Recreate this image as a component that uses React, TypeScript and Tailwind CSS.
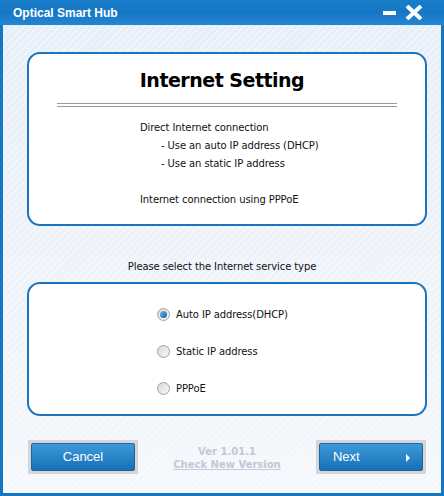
import React from "react"

const tahoma = { fontFamily: "'DejaVu Sans', Verdana, sans-serif" }

function Radio({ checked }: { checked?: boolean }) {
  return (
    <span className="w-[13px] h-[13px] rounded-full border border-[#a3a3a3] bg-gradient-to-br from-[#d8d8d8] to-[#f8f8f8] flex items-center justify-center">
      {checked && <span className="w-[7px] h-[7px] rounded-full bg-gradient-to-br from-[#6bbcf0] to-[#0f5f9c]" />}
    </span>
  )
}

function BlueButton({ label, arrow }: { label: string; arrow?: boolean }) {
  return (
    <div className="w-[110px] h-[34px] bg-[#d4d6d8] p-[3px]">
      <div
        className="h-full rounded-[2px] bg-gradient-to-b from-[#3d9ad9] to-[#1570b7] border border-[#1a66a6] flex items-center text-white text-[13px] relative"
        style={{ fontFamily: "'Liberation Sans', Arial, sans-serif" }}
      >
        {arrow ? (
          <>
            <span className="pl-[13px]">{label}</span>
            <span className="absolute right-[12px] top-[10px] w-0 h-0 border-y-[4px] border-y-transparent border-l-[4px] border-l-white" />
          </>
        ) : (
          <span className="w-full text-center">{label}</span>
        )}
      </div>
    </div>
  )
}

export default function App() {
  return (
    <div className="w-[444px] h-[496px] bg-[#1577c4] flex flex-col">
      {/* Title bar */}
      <div className="h-[25px] flex items-center justify-between pl-[13px] pr-[21px] bg-gradient-to-b from-[#1a7dc9] via-[#1678c5] to-[#2386d3]">
        <span className="text-white font-bold text-[12px]" style={{ fontFamily: "'Liberation Sans', Arial, sans-serif" }}>
          Optical Smart Hub
        </span>
        <div className="flex items-center gap-[9px]">
          <span className="w-[13px] h-[4px] bg-white mt-[1px]" />
          <svg width="18" height="15" viewBox="0 0 18 15">
            <path d="M2 1 L16 14 M16 1 L2 14" stroke="white" strokeWidth="4" />
          </svg>
        </div>
      </div>

      {/* Content */}
      <div
        className="flex-1 mx-[3px] mb-[3px] flex flex-col pl-[24px] pr-[14px] pt-[27px]"
        style={{ backgroundImage: "repeating-linear-gradient(135deg, rgba(255,255,255,0.35) 0 2px, transparent 2px 5px), linear-gradient(#e6eef7, #f4f7fb)" }}
      >
        <div className="h-[174px] bg-white border-2 border-[#1c73bd] rounded-[13px] flex flex-col items-center pt-[13px]">
          <h1 className="text-[19px] font-bold text-black leading-[26px] tracking-[-0.5px] -ml-[10px]" style={tahoma}>
            Internet Setting
          </h1>
          <div className="w-[340px] h-[4px] border-y border-[#9a9a9a] mt-[10px]" />
          <div className="self-start ml-[111px] mt-[12px] text-[10px] text-[#111] leading-[18px] tracking-[-0.1px]" style={tahoma}>
            <p>Direct Internet connection</p>
            <p className="pl-[21px]">- Use an auto IP address (DHCP)</p>
            <p className="pl-[21px]">- Use an static IP address</p>
            <p className="mt-[18px]">Internet connection using PPPoE</p>
          </div>
        </div>

        <p className="text-center text-[10px] text-[#111] mt-[33px] leading-[16px] -ml-[10px] tracking-[-0.1px]" style={tahoma}>
          Please select the Internet service type
        </p>

        <div
          className="h-[134px] mt-[7px] bg-white border-2 border-[#1c73bd] rounded-[13px] flex flex-col pl-[128px] pt-[24px] gap-[24px] text-[10px] text-[#111] tracking-[-0.1px]"
          style={tahoma}
        >
          <label className="flex items-center gap-[6px] h-[13px]">
            <Radio checked />
            <span>Auto IP address(DHCP)</span>
          </label>
          <label className="flex items-center gap-[6px] h-[13px]">
            <Radio />
            <span>Static IP address</span>
          </label>
          <label className="flex items-center gap-[6px] h-[13px]">
            <Radio />
            <span>PPPoE</span>
          </label>
        </div>

        <div className="flex items-center justify-between mt-[24px] pl-[1px] pr-[1px]">
          <BlueButton label="Cancel" />
          <div className="flex flex-col items-center text-[10px] font-bold text-[#c0c9d4] leading-[13px] mt-[1px]" style={tahoma}>
            <span>Ver 1.01.1</span>
            <span className="underline">Check New Version</span>
          </div>
          <BlueButton label="Next" arrow />
        </div>
      </div>
    </div>
  )
}
